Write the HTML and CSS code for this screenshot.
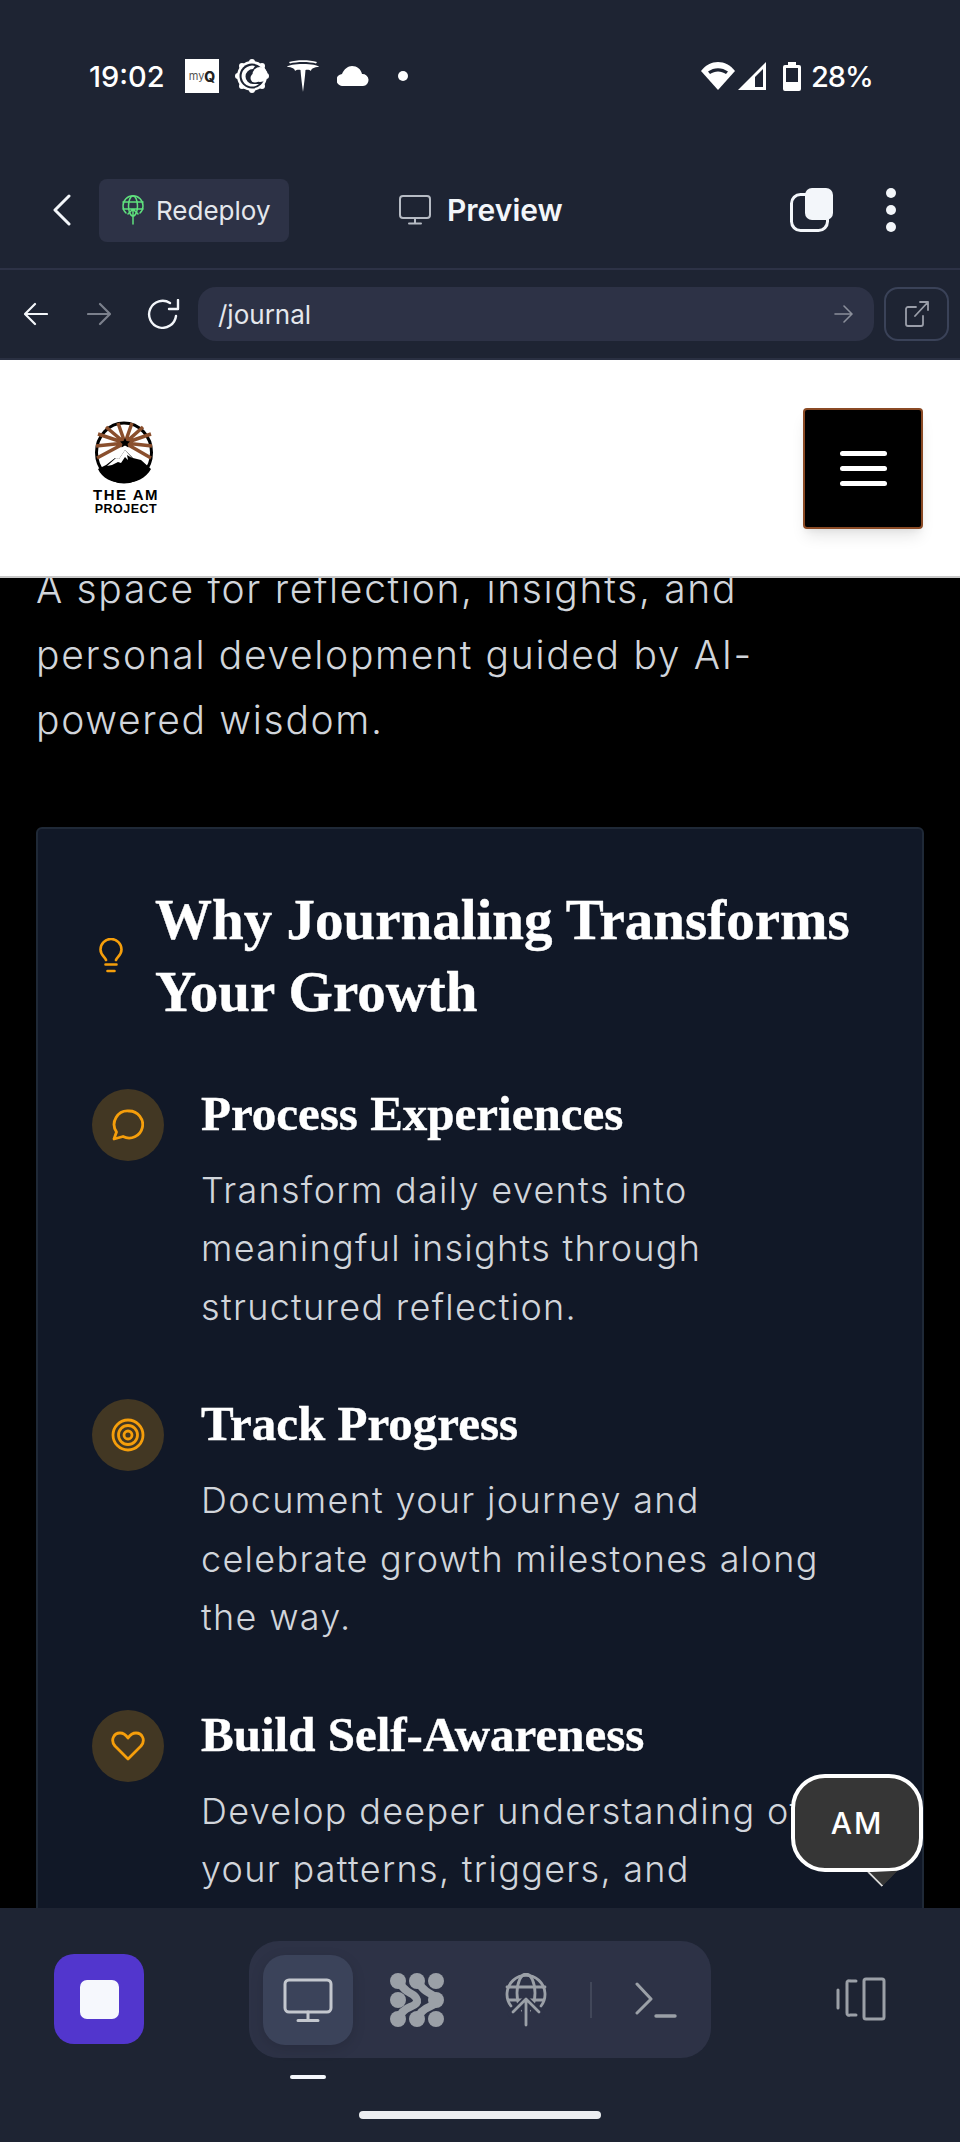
FILE: index.html
```html
<!DOCTYPE html>
<html lang="en">
<head>
  <meta charset="UTF-8">
  <meta name="viewport" content="width=device-width, initial-scale=1.0">
  <title>Journal Preview</title>
  <link rel="stylesheet" href="styles.css">
</head>
<body>
  <div class="phone">
    <div class="status-bar">
      <span class="time">19:02</span>
      <span class="myq"><span class="myq-my">my</span><span class="myq-q">Q</span></span>
      <svg class="st-gear" width="34" height="34" viewBox="0 0 34 34">
        <g fill="#fff"><circle cx="17" cy="17" r="15"/><circle cx="17" cy="3" r="3"/><circle cx="17" cy="31" r="3"/><circle cx="3" cy="17" r="3"/><circle cx="31" cy="17" r="3"/><circle cx="7" cy="7" r="3"/><circle cx="27" cy="7" r="3"/><circle cx="7" cy="27" r="3"/><circle cx="27" cy="27" r="3"/></g>
        <circle cx="17" cy="17" r="12.500" fill="#1e2433"/>
        <path d="M20 7a10.500 10.500 0 1 0 4 18h-6a7.500 7.500 0 0 1 0-15z" fill="#fff"/>
        <circle cx="25" cy="15.500" r="7.500" fill="#fff"/><circle cx="20" cy="19" r="4.500" fill="#fff"/>
      </svg>
      <svg class="st-tesla" width="32" height="32" viewBox="0 0 32 32"><path d="M16 32c-1-8-2-15-2.500-22-2-.5-4.500 0-5.500 1 0-2-3-4-8-4 1-2 8-3 16-3s15 1 16 3c-5 0-8 2-8 4-1-1-3.500-1.500-5.500-1-.5 7-1.500 14-2.500 22z" fill="#fff"/><path d="M2 2c8-2.500 20-2.500 28 0l-1 1.500C22 1.500 10 1.500 3 3.500z" fill="#fff"/></svg>
      <svg class="st-cloud" width="32" height="20" viewBox="0 0 32 20"><path d="M6 20a6 6 0 0 1-1-12C7 3 11 0 15 0c5 0 9 3 10 8a6 6 0 0 1 1 12z" fill="#fff"/></svg>
      <span class="st-dot"></span>
      <span class="status-right">
        <svg width="34" height="28" viewBox="0 0 34 28"><path d="M0 9C9-3 25-3 34 9L17 28z" fill="#fff"/><path d="M7 9.500c6-4.500 14-4.500 20 0l-2 2.500c-5-3.500-11-3.500-16 0z" fill="#1e2433"/></svg>
        <svg class="st-signal" width="28" height="28" viewBox="0 0 28 28"><path d="M28 0v28H0zM25 7l-8 8v10h8z" fill="#fff" fill-rule="evenodd"/></svg>
        <svg class="st-batt" width="18" height="29" viewBox="0 0 18 29"><path d="M5 0h8v3h3a2 2 0 0 1 2 2v22a2 2 0 0 1-2 2H2a2 2 0 0 1-2-2V5a2 2 0 0 1 2-2h3zM3 6v14h12V6z" fill="#fff" fill-rule="evenodd"/></svg>
        <span class="battery-pct">28%</span>
      </span>
    </div>

    <div class="app-bar">
      <svg class="back" width="20" height="32" viewBox="0 0 20 32"><path d="M17 2L3 16l14 14" fill="none" stroke="#f3f6fa" stroke-width="3" stroke-linecap="round" stroke-linejoin="round"/></svg>
      <button class="redeploy">
        <svg width="22" height="30" viewBox="0 0 22 30" fill="none" stroke="#5fe07d" stroke-width="1.500" stroke-linecap="round"><path d="M4 18a10 10 0 1 1 14 0"/><ellipse cx="11" cy="11" rx="4.500" ry="10"/><path d="M1 7h20M1 14h20M11 29V14M6 19l5-5 5 5"/></svg>
        Redeploy
      </button>
      <span class="preview-label">
        <svg width="32" height="30" viewBox="0 0 32 30" fill="none" stroke="#b6bbc4" stroke-width="2" stroke-linecap="round"><rect x="1" y="1" width="30" height="22" rx="3"/><path d="M16 23v5M10 28.500h12"/></svg>
        Preview
      </span>
      <svg class="copy" width="43" height="44" viewBox="0 0 43 44"><rect x="1.500" y="6.500" width="36" height="36" rx="9" fill="none" stroke="#f3f6fa" stroke-width="3"/><rect x="15" y="0" width="28" height="32" rx="7" fill="#f3f6fa"/></svg>
      <span class="dots"><i></i><i></i><i></i></span>
    </div>

    <div class="url-bar">
      <svg class="nav-arrow" width="24" height="24" viewBox="0 0 24 24" fill="none" stroke="#f3f6fa" stroke-width="2.200" stroke-linecap="round" stroke-linejoin="round"><path d="M23 12H2M11 2L1 12l10 10"/></svg>
      <svg class="nav-arrow fwd" width="24" height="24" viewBox="0 0 24 24" fill="none" stroke="#7b808c" stroke-width="2.200" stroke-linecap="round" stroke-linejoin="round"><path d="M1 12h21M13 2l10 10-10 10"/></svg>
      <svg class="reload" width="34" height="30" viewBox="0 0 34 30" fill="none" stroke="#f3f6fa" stroke-width="2.400" stroke-linecap="round" stroke-linejoin="round"><path d="M30 17A13.500 13.500 0 1 1 24 4"/><path d="M32 1v9h-9"/></svg>
      <div class="url-pill">
        <span>/journal</span>
        <svg width="19" height="18" viewBox="0 0 19 18" fill="none" stroke="#8b8f9b" stroke-width="1.600" stroke-linecap="round" stroke-linejoin="round"><path d="M1 9h16M10 1l8 8-8 8"/></svg>
      </div>
      <button class="external">
        <svg width="24" height="26" viewBox="0 0 24 26" fill="none" stroke="#9a9ea9" stroke-width="1.800" stroke-linecap="round" stroke-linejoin="round"><path d="M11 6H3a2 2 0 0 0-2 2v15a2 2 0 0 0 2 2h13a2 2 0 0 0 2-2v-8M10 15L23 1M15 1h8v8"/></svg>
      </button>
    </div>

    <header class="site-header">
      <div class="logo">
        <svg class="logo-mark" width="60" height="63" viewBox="0 0 60 63">
          <ellipse cx="30" cy="31.500" rx="27.500" ry="29.500" fill="#fff" stroke="#000" stroke-width="3"/>
          <g stroke="#8a4f2d" stroke-width="3.500">
            <path d="M31 22L4 13M31 22L12 6M31 22L24 2M31 22L38 2M31 22L49 6M31 22L57 13M31 22L2 25M31 22L58 25M31 22L3 37M31 22L57 37"/>
          </g>
          <path d="M31 17l1.500 3 3.500.5-2.500 2.500 1 3.500-3.500-2-3.500 2 1-3.500-2.500-2.500 3.500-.5z" fill="#000"/>
          <path d="M31 29l8 8 8 2 10 9c-5 9-15 14-27 14S8 57 4 48l8-4 9-7 4 1z" fill="#000"/>
          <path d="M31 29l-6 9-3-1-9 8 5-1 6-3 3 1 4-6 3 3-1-5 5 3z" fill="#fff"/>
        </svg>
        <span class="logo-main">THE AM</span>
        <span class="logo-sub">PROJECT</span>
      </div>
      <button class="menu-btn"><i></i><i></i><i></i></button>
    </header>

    <main class="content">
      <p class="lead">A space for reflection, insights, and<br>personal development guided by AI-<br>powered wisdom.</p>

      <section class="card">
        <div class="card-title">
          <svg width="24" height="35" viewBox="0 0 24 35" fill="none" stroke="#f59e0b" stroke-width="2.600" stroke-linecap="round"><path d="M7 22c-1-3-5.500-5-5.500-10.500a10.500 10.500 0 0 1 21 0C22.500 17 18 19 17 22"/><path d="M6.500 26.500h11M8.500 33h7"/></svg>
          <h2>Why Journaling Transforms<br>Your Growth</h2>
        </div>

        <div class="benefit">
          <span class="benefit-icon">
            <svg width="32" height="32" viewBox="0 0 32 32" fill="none" stroke="#f59e0b" stroke-width="2.800" stroke-linejoin="round"><path d="M17 2a13.500 13.500 0 1 1-6 25.500L2 30l2.500-7A13.500 13.500 0 0 1 17 2z"/></svg>
          </span>
          <div>
            <h3>Process Experiences</h3>
            <p>Transform daily events into<br>meaningful insights through<br>structured reflection.</p>
          </div>
        </div>

        <div class="benefit">
          <span class="benefit-icon">
            <svg width="34" height="34" viewBox="0 0 34 34" fill="none" stroke="#f59e0b" stroke-width="2.800"><circle cx="17" cy="17" r="15"/><circle cx="17" cy="17" r="9.500"/><circle cx="17" cy="17" r="4"/></svg>
          </span>
          <div>
            <h3>Track Progress</h3>
            <p>Document your journey and<br>celebrate growth milestones along<br>the way.</p>
          </div>
        </div>

        <div class="benefit">
          <span class="benefit-icon">
            <svg width="34" height="30" viewBox="0 0 34 30" fill="none" stroke="#f59e0b" stroke-width="2.800" stroke-linejoin="round"><path d="M17 28L4 15C-1 9 3 2 9 2c4 0 6 2 8 5 2-3 4-5 8-5 6 0 10 7 5 13z"/></svg>
          </span>
          <div>
            <h3>Build Self-Awareness</h3>
            <p>Develop deeper understanding of<br>your patterns, triggers, and<br>growth areas.</p>
          </div>
        </div>
      </section>

      <div class="chat-bubble">AM</div>
    </main>

    <nav class="bottom-bar">
      <button class="stop-btn"><i></i></button>
      <div class="tool-group">
        <span class="tool active">
          <svg width="50" height="44" viewBox="0 0 50 44" fill="none" stroke="#c3c7ce" stroke-width="3" stroke-linecap="round"><rect x="2" y="2" width="46" height="32" rx="4"/><path d="M25 34v8M15 42.500h20"/></svg>
        </span>
        <span class="tool">
          <svg width="54" height="54" viewBox="0 0 54 54"><g fill="#9ba0a7"><circle cx="8" cy="8" r="8"/><circle cx="27" cy="8" r="8"/><circle cx="46" cy="8" r="8"/><circle cx="8" cy="27" r="8"/><circle cx="46" cy="27" r="8"/><circle cx="8" cy="46" r="8"/><circle cx="27" cy="46" r="8"/><circle cx="46" cy="46" r="8"/></g><path d="M8 8Q14 17 20 20T27 27T20 34T8 46M27 8Q33 17 39 20T46 27T39 34T27 46" fill="none" stroke="#9ba0a7" stroke-width="8"/></svg>
        </span>
        <span class="tool">
          <svg width="42" height="54" viewBox="0 0 42 54" fill="none" stroke="#9ba0a7" stroke-width="2.800" stroke-linecap="round" stroke-linejoin="round"><path d="M6 33a19 19 0 1 1 30 0"/><ellipse cx="21" cy="20" rx="9" ry="19"/><path d="M2 14h38M4 27h34"/><path d="M21 54V30M7 41l14-14 14 14" stroke="#2d3246" stroke-width="8"/><path d="M21 52V28M8 39l13-13 13 13"/></svg>
        </span>
        <span class="tool-sep"></span>
        <span class="tool">
          <svg width="42" height="36" viewBox="0 0 42 36" fill="none" stroke="#9ba0a7" stroke-width="3" stroke-linecap="round" stroke-linejoin="round"><path d="M2 2l14 15L2 31"/><path d="M21 34h19" stroke-width="3.400"/></svg>
        </span>
      </div>
      <svg class="device-icon" width="50" height="44" viewBox="0 0 50 44" fill="none" stroke="#9ba0a7" stroke-width="3" stroke-linecap="round" stroke-linejoin="round"><path d="M2 13v18M20 4h-6a2 2 0 0 0-3 2v30a2 2 0 0 0 3 2h6"/><rect x="28" y="2" width="20" height="40" rx="2"/></svg>
      <span class="active-mark"></span>
      <span class="home-indicator"></span>
    </nav>
  </div>
</body>
</html>
```

FILE: styles.css
```css
* {
  box-sizing: border-box;
}
html, body {
  margin: 0;
  padding: 0;
  background: #000;
}
button {
  border: none;
  padding: 0;
  font: inherit;
}
p, h2, h3 {
  margin: 0;
}
.phone {
  width: 960px;
  height: 2142px;
  display: flex;
  flex-direction: column;
  overflow: hidden;
  font-family: Inter, "Liberation Sans", sans-serif;
  position: relative;
}

/* status bar */
.status-bar {
  height: 152px;
  flex-shrink: 0;
  background: #1e2433;
  display: flex;
  align-items: center;
  padding-left: 89px;
  color: #fff;
}
.time {
  width: 76px;
  font-size: 29px;
  font-weight: 500;
  white-space: nowrap;
}
.myq {
  margin-left: 20px;
  width: 34px;
  height: 34px;
  background: #fff;
  display: flex;
  align-items: center;
  justify-content: center;
  font-size: 11px;
  color: #555;
}
.myq-q {
  font-size: 14px;
  font-weight: 800;
  color: #222;
}
.st-gear { margin-left: 16px; }
.st-tesla { margin-left: 18px; }
.st-cloud { margin-left: 18px; }
.st-dot {
  margin-left: 29px;
  width: 10px;
  height: 10px;
  border-radius: 50%;
  background: #fff;
}
.status-right {
  margin-left: auto;
  margin-right: 89px;
  display: flex;
  align-items: center;
}
.st-signal { margin-left: 3px; }
.st-batt { margin-left: 17px; }
.battery-pct {
  margin-left: 10px;
  width: 60px;
  font-size: 29px;
  font-weight: 500;
  letter-spacing: -1px;
  white-space: nowrap;
}

/* app bar */
.app-bar {
  height: 118px;
  flex-shrink: 0;
  background: #1e2433;
  border-bottom: 2px solid #2d3246;
  display: flex;
  align-items: center;
  padding: 0 0 0 52px;
  color: #fff;
}
.redeploy {
  margin-left: 27px;
  width: 190px;
  height: 63px;
  background: #2d3246;
  border-radius: 8px;
  color: #e4e7ec;
  font-size: 26px;
  display: flex;
  align-items: center;
  gap: 12px;
  padding-left: 23px;
}
.preview-label {
  margin-left: 110px;
  display: flex;
  align-items: center;
  gap: 16px;
  font-size: 30px;
  font-weight: 600;
  color: #f3f6fa;
}
.copy { margin-left: 227px; }
.dots {
  margin-left: 53px;
  display: flex;
  flex-direction: column;
  gap: 7px;
}
.dots i {
  width: 10px;
  height: 10px;
  border-radius: 50%;
  background: #f3f6fa;
}

/* url bar */
.url-bar {
  height: 90px;
  flex-shrink: 0;
  background: #1e2433;
  border-bottom: 2px solid #2a3042;
  display: flex;
  align-items: center;
  padding-left: 24px;
}
.nav-arrow.fwd { margin-left: 39px; }
.reload { margin-left: 35px; }
.url-pill {
  margin-left: 18px;
  width: 676px;
  height: 54px;
  background: #2d3246;
  border-radius: 18px;
  display: flex;
  align-items: center;
  justify-content: space-between;
  padding: 0 21px 0 20px;
  color: #e4e7ec;
  font-size: 26px;
}
.external {
  margin-left: 10px;
  width: 65px;
  height: 54px;
  background: transparent;
  border: 2px solid #3a4258;
  border-radius: 14px;
  display: flex;
  align-items: center;
  justify-content: center;
}

/* site header */
.site-header {
  height: 218px;
  flex-shrink: 0;
  background: #fff;
  border-bottom: 2px solid #c8c8c8;
  display: flex;
  align-items: center;
  justify-content: space-between;
  padding: 0 37px 0 92px;
  position: relative;
  z-index: 2;
}
.logo {
  width: 68px;
  display: flex;
  flex-direction: column;
  align-items: center;
  color: #000;
  font-family: "Liberation Sans", sans-serif;
  font-weight: 700;
  line-height: 1;
}
.logo-mark {
  margin-left: -5px;
}
.logo-main {
  margin-top: 3px;
  font-size: 15px;
  letter-spacing: 1.500px;
  white-space: nowrap;
}
.logo-sub {
  margin-top: 1px;
  font-size: 12.500px;
  letter-spacing: 0.500px;
  white-space: nowrap;
}
.menu-btn {
  width: 120px;
  height: 121px;
  background: #000;
  border: 2px solid #8a4a25;
  border-radius: 4px;
  box-shadow: 0 10px 15px -3px rgba(0,0,0,0.1), 0 4px 6px -2px rgba(0,0,0,0.05);
  display: flex;
  flex-direction: column;
  align-items: center;
  justify-content: center;
  gap: 10px;
}
.menu-btn i {
  width: 47px;
  height: 5px;
  border-radius: 3px;
  background: #fff;
}

/* page content */
.content {
  flex: 1;
  min-height: 0;
  overflow: hidden;
  background: #000;
  padding: 0 36px;
  position: relative;
}
.lead {
  margin-top: -22px;
  font-size: 39px;
  font-weight: 300;
  line-height: 65.500px;
  letter-spacing: 1.670px;
  color: #d1d5db;
}
.card {
  margin-top: 74px;
  background: #111827;
  border: 2px solid #1f2937;
  border-radius: 6px;
  padding: 55px 54px 40px;
}
.card-title {
  display: flex;
  align-items: center;
  gap: 32px;
  margin-left: 7px;
}
.card-title svg {
  flex-shrink: 0;
}
h2 {
  font-family: "Liberation Serif", serif;
  font-size: 57px;
  font-weight: 700;
  line-height: 72px;
  color: #fff;
  -webkit-text-stroke: 0.4px #fff;
}
.benefit {
  display: flex;
  gap: 37px;
  margin-bottom: 57px;
}
.card-title + .benefit {
  margin-top: 55px;
}
.benefit-icon {
  flex-shrink: 0;
  width: 72px;
  height: 72px;
  margin-top: 6px;
  border-radius: 50%;
  background: #423723;
  display: flex;
  align-items: center;
  justify-content: center;
}
h3 {
  font-family: "Liberation Serif", serif;
  font-size: 49px;
  font-weight: 700;
  line-height: 62px;
  color: #fff;
  -webkit-text-stroke: 0.4px #fff;
}
.benefit p {
  margin-top: 16px;
  font-size: 36px;
  font-weight: 300;
  line-height: 58.500px;
  letter-spacing: 1.300px;
  color: #d1d5db;
  white-space: nowrap;
}
.chat-bubble {
  position: absolute;
  right: 37px;
  top: 1196px;
  width: 132px;
  height: 98px;
  background: #363636;
  border: 4px solid #fff;
  border-radius: 34px;
  color: #fff;
  font-size: 30px;
  font-weight: 500;
  letter-spacing: 2px;
  display: flex;
  align-items: center;
  justify-content: center;
}
.chat-bubble::after {
  content: "";
  position: absolute;
  right: 26px;
  bottom: -15px;
  width: 21px;
  height: 21px;
  background: #363636;
  border-bottom: 2px solid #ddd;
  transform: rotate(45deg);
  clip-path: polygon(100% 0, 100% 100%, 0 100%);
}

/* bottom tool bar */
.bottom-bar {
  height: 234px;
  flex-shrink: 0;
  background: #1e2433;
  position: relative;
  padding: 33px 0 0 54px;
  display: flex;
  align-items: flex-start;
}
.stop-btn {
  margin-top: 13px;
  width: 90px;
  height: 90px;
  border-radius: 20px;
  background: #5236cd;
  display: flex;
  align-items: center;
  justify-content: center;
}
.stop-btn i {
  width: 39px;
  height: 39px;
  border-radius: 7px;
  background: #f6f8fd;
}
.tool-group {
  margin-left: 105px;
  width: 462px;
  height: 117px;
  border-radius: 30px;
  background: #2d3246;
  display: flex;
  align-items: center;
  padding-left: 14px;
}
.tool {
  width: 90px;
  height: 90px;
  display: flex;
  align-items: center;
  justify-content: center;
  border-radius: 22px;
  margin-right: 19px;
  flex-shrink: 0;
}
.tool.active {
  background: #3b435a;
  box-shadow: 0 4px 14px rgba(0,0,0,0.12);
}
.tool-sep {
  width: 2px;
  height: 36px;
  background: #414759;
  margin-left: 0;
  margin-right: 19px;
  flex-shrink: 0;
}
.device-icon {
  margin: 36px 0 0 125px;
}
.active-mark {
  position: absolute;
  left: 290px;
  top: 167px;
  width: 36px;
  height: 4px;
  border-radius: 2px;
  background: #f6f8fd;
}
.home-indicator {
  position: absolute;
  left: 359px;
  top: 203px;
  width: 242px;
  height: 8px;
  border-radius: 4px;
  background: #eceef1;
}
```
